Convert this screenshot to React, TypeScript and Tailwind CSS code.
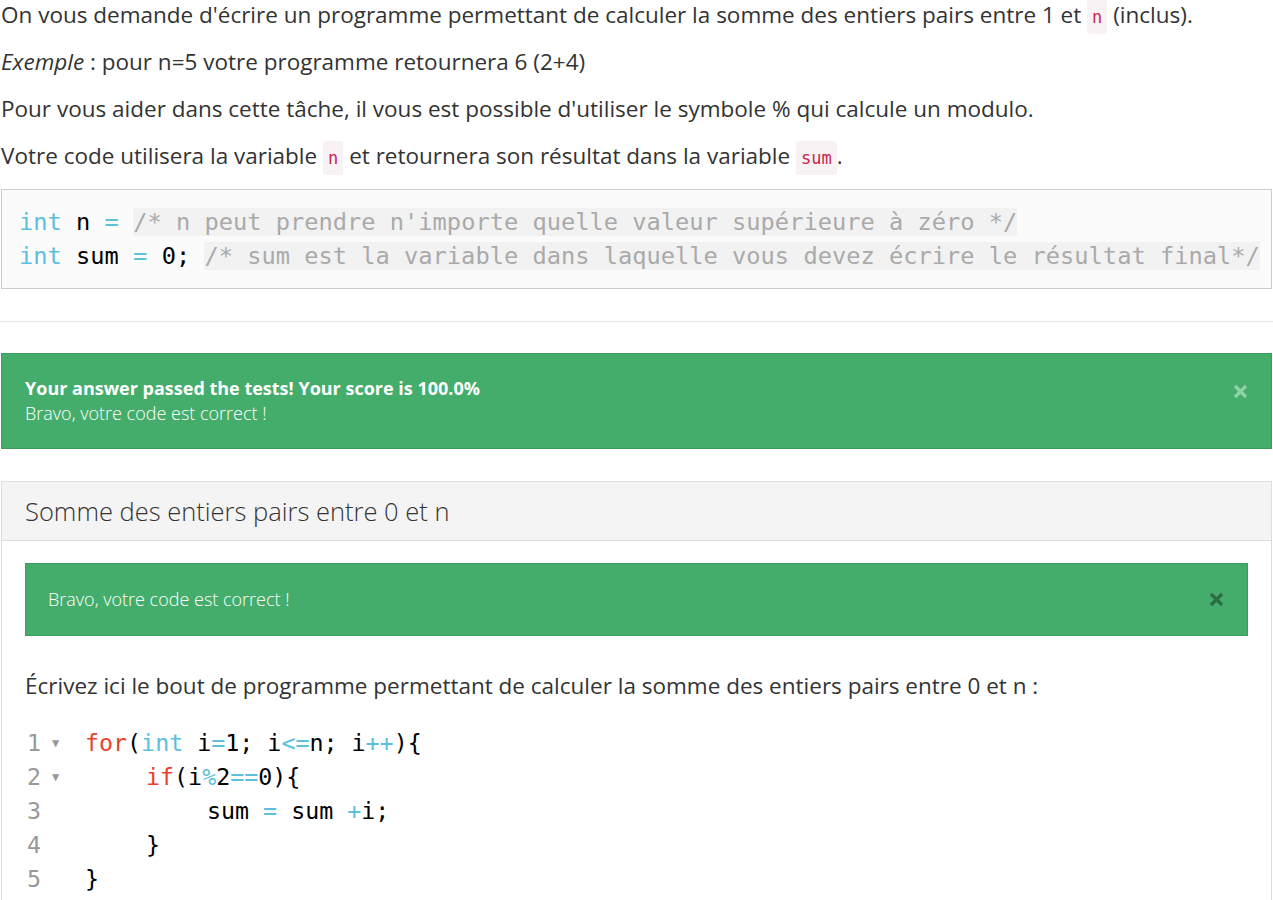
import React from "react";

const mono = "font-['DejaVu_Sans_Mono',monospace]";

function InlineCode({ children }: { children: React.ReactNode }) {
  return (
    <code className={`${mono} text-[17px] leading-none text-[#c7254e] bg-[#f9f2f4] px-[5px] py-[7px] rounded-[2px]`}>
      {children}
    </code>
  );
}

function Close({ color }: { color: string }) {
  return (
    <svg width="15" height="15" viewBox="0 0 15 15" className={color}>
      <path d="M2 2 L13 13 M13 2 L2 13" stroke="currentColor" strokeWidth="3.2" strokeLinecap="butt" />
    </svg>
  );
}

const K = ({ children }: { children: React.ReactNode }) => <span className="text-[#e8412c]">{children}</span>;
const B = ({ children }: { children: React.ReactNode }) => <span className="text-[#5bc0de]">{children}</span>;

export default function App() {
  const lines: { indent: number; fold: boolean; content: React.ReactNode }[] = [
    {
      indent: 0,
      fold: true,
      content: (
        <>
          <K>for</K>(<B>int</B> i<B>=</B>1; i<B>&lt;=</B>n; i<B>++</B>){"{"}
        </>
      ),
    },
    {
      indent: 1,
      fold: true,
      content: (
        <>
          <K>if</K>(i<B>%</B>2<B>==</B>0){"{"}
        </>
      ),
    },
    {
      indent: 2,
      fold: false,
      content: (
        <>
          sum <B>=</B> sum <B>+</B>i;
        </>
      ),
    },
    { indent: 1, fold: false, content: <>{"}"}</> },
    { indent: 0, fold: false, content: <>{"}"}</> },
  ];

  return (
    <div className="w-[1273px] h-[900px] overflow-hidden bg-white font-['Open_Sans',sans-serif] text-[#333]">
      <p className="text-[22.5px] leading-[30px] mb-[17px] pl-[1px]">
        On vous demande d'écrire un programme permettant de calculer la somme des entiers pairs entre 1 et{" "}
        <InlineCode>n</InlineCode> (inclus).
      </p>
      <p className="text-[22.5px] leading-[30px] mb-[17px] pl-[1px]">
        <em>Exemple</em> : pour n=5 votre programme retournera 6 (2+4)
      </p>
      <p className="text-[22.5px] leading-[30px] mb-[17px] pl-[1px]">
        Pour vous aider dans cette tâche, il vous est possible d'utiliser le symbole % qui calcule un modulo.
      </p>
      <p className="text-[22.5px] leading-[30px] mb-[18px] pl-[1px]">
        Votre code utilisera la variable <InlineCode>n</InlineCode> et retournera son résultat dans la variable{" "}
        <InlineCode>sum</InlineCode>.
      </p>

      <div className={`ml-[1px] w-[1271px] border border-[#ccc] bg-[#fbfbfb] pl-[17px] pr-[4px] py-[15px] ${mono} text-[23.7px] leading-[34px] text-black whitespace-pre`}>
        <div>
          <B>int</B> n <B>=</B> <span className="bg-[#f2f2f2] text-[#aaa]">/* n peut prendre n'importe quelle valeur supérieure à zéro */</span>
        </div>
        <div>
          <B>int</B> sum <B>=</B> 0; <span className="bg-[#f2f2f2] text-[#aaa]">/* sum est la variable dans laquelle vous devez écrire le résultat final*/</span>
        </div>
      </div>

      <hr className="mt-[32px] mb-[31px] border-0 border-t border-[#e3e3e3]" />

      <div className="ml-[1px] w-[1271px] bg-[#44ad6b] border border-[#3c9c5e] pl-[23px] pr-[23px] py-[22px] text-white flex items-start justify-between">
        <div className="text-[18px] leading-[25px]">
          <div className="font-bold">Your answer passed the tests! Your score is 100.0%</div>
          <div className="font-light">Bravo, votre code est correct !</div>
        </div>
        <div className="pt-[8px]">
          <Close color="text-[#8fd2a8]" />
        </div>
      </div>

      <div className="mt-[32px] ml-[1px] w-[1271px] border border-[#ddd]">
        <div className="bg-[#f4f4f4] border-b border-[#ddd] h-[59px] flex items-center pl-[23px]">
          <span className="text-[25.5px] font-light text-[#333]">Somme des entiers pairs entre 0 et n</span>
        </div>
        <div className="px-[23px] pt-[22px] pb-[40px]">
          <div className="bg-[#44ad6b] border border-[#3c9c5e] h-[73px] flex items-center justify-between pl-[22px] pr-[23px] text-white">
            <span className="text-[18px] font-light">Bravo, votre code est correct !</span>
            <Close color="text-[#2d6c45]" />
          </div>
          <p className="text-[22.5px] leading-[31px] mt-[34px] mb-[25px]">
            Écrivez ici le bout de programme permettant de calculer la somme des entiers pairs entre 0 et n :
          </p>
          <div className={`${mono} text-[23.3px] leading-[34px] text-black`}>
            {lines.map((l, i) => (
              <div key={i} className="flex">
                <div className="w-[60px] flex items-center text-[#999] pl-[2px]">
                  <span className="w-[24px]">{i + 1}</span>
                  {l.fold ? <span className="text-[12px] leading-none ml-[1px]">▼</span> : null}
                </div>
                <div
                  className={`whitespace-pre ${l.indent === 0 ? "pl-0" : l.indent === 1 ? "pl-[61px]" : "pl-[122px]"}`}
                >
                  {l.content}
                </div>
              </div>
            ))}
          </div>
        </div>
      </div>
    </div>
  );
}
